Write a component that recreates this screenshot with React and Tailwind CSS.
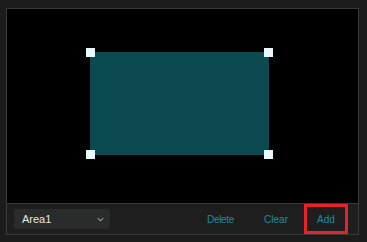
import React from 'react';

const Handle = ({ className }) => (
    <div className={`absolute w-[9px] h-[9px] bg-[#e8f8fc] ${className}`}></div>
);

const App = () => {
    return (
        <div className="w-[367px] h-[242px] bg-[#1c1c1c] pt-[8px] px-[6px] font-['Liberation_Sans',Arial,sans-serif]">
            <div className="w-[353px] h-[227px] border border-[#3a3a3a] flex flex-col">
                {/* Drawing canvas */}
                <div className="relative h-[198px] bg-black">
                    <div className="absolute left-[83px] top-[43px] w-[179px] h-[103px] bg-[#0b4a50]">
                        <Handle className="-left-[4px] -top-[4px]" />
                        <Handle className="-right-[4px] -top-[4px]" />
                        <Handle className="-left-[4px] -bottom-[4px]" />
                        <Handle className="-right-[4px] -bottom-[4px]" />
                    </div>
                </div>

                {/* Toolbar */}
                <div className="flex-1 border-t border-[#3a3a3a] bg-[#1e1e1e] flex items-center pl-[7px] pr-[10px]">
                    <div className="w-[96px] h-[20px] rounded-[3px] bg-[#2a2b2b] flex items-center justify-between pl-[8px] pr-[5px]">
                        <span className="text-[11px] text-[#e6e6e6]">Area1</span>
                        <svg width="9" height="9" viewBox="0 0 10 10" fill="none" stroke="#9a9a9a" strokeWidth="1.2">
                            <path d="M2 3.5 L5 6.5 L8 3.5" />
                        </svg>
                    </div>
                    <div className="ml-auto flex items-center text-[10px] text-[#1f8ca6]">
                        <button className="px-[8px] tracking-[-0.3px]">Delete</button>
                        <button className="ml-[14px] px-[8px]">Clear</button>
                        <button className="ml-[8px] w-[44px] h-[30px] border-[3px] border-[#e8222a] flex items-center justify-center">Add</button>
                    </div>
                </div>
            </div>
        </div>
    );
};

export default App;
